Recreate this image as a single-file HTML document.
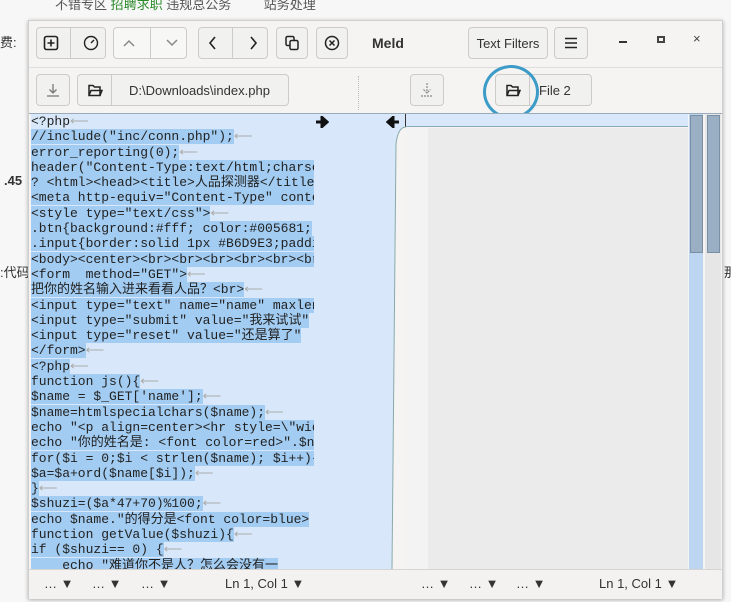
<!DOCTYPE html>
<html><head><meta charset="utf-8"><style>
*{margin:0;padding:0;box-sizing:border-box}
body{width:731px;height:602px;overflow:hidden;background:#f7f7f7;font-family:"Liberation Sans","Noto Sans CJK SC",sans-serif;position:relative}
.bgt{position:absolute;font-size:13px;color:#333}
.win{position:absolute;left:28px;top:20px;width:695px;height:579px;background:#f5f4f3;border:1px solid #cfcfcf;box-shadow:0 1px 4px rgba(0,0,0,.3)}
.btn{position:absolute;height:32px;background:#f1f1f0;border:1px solid #cdcbc8;border-radius:4px;display:flex;align-items:center;justify-content:center;color:#333;font-size:13px}
.sep{border-left:1px solid #cdcbc8}
svg{display:block}
.code{position:absolute;left:2px;top:93px;width:345px;height:455px;background:#d8e8fa;overflow:hidden;font-family:"Liberation Mono","Noto Sans CJK SC",monospace;font-size:13px;color:#222}
.code>div>div{height:15.3px;line-height:15.3px;white-space:pre;overflow:visible}
.code span{background:#a2ccf2}
.code i{font-style:normal;color:#aaa}
.status{position:absolute;left:0;top:548px;width:693px;height:30px;background:#f3f2f1;border-top:1px solid #d5d5d5;font-size:13px;color:#333}
.status div{position:absolute;top:6px}
</style></head><body>
<div class="bgt" style="left:55px;top:-6px;color:#555">不错专区 <span style="color:#2a8a2a">招聘求职</span> 违规总公务 &nbsp;&nbsp;&nbsp;&nbsp;&nbsp;&nbsp;&nbsp;&nbsp;站务处理</div>
<div class="bgt" style="left:0;top:32px">费:</div>
<div class="bgt" style="left:4px;top:173px;font-weight:bold">.45</div>
<div class="bgt" style="left:0;top:262px">:代码</div>
<div class="bgt" style="left:724px;top:262px">那</div>
<div class="win">
 <div class="btn" style="left:7px;top:6px;width:70px;justify-content:space-around"><svg width="16" height="16"><rect x="1.5" y="1.5" width="13" height="13" rx="2" fill="none" stroke="#222" stroke-width="1.6"/><path d="M8 4.5v7M4.5 8h7" stroke="#222" stroke-width="1.6"/></svg><span class="sep" style="height:30px"></span><svg width="16" height="16"><circle cx="8" cy="8" r="6.5" fill="none" stroke="#222" stroke-width="1.4"/><path d="M8 8l3-3" stroke="#222" stroke-width="1.4"/></svg></div>
 <div class="btn" style="left:84px;top:6px;width:74px;justify-content:space-around;background:#f7f7f6"><svg width="16" height="16"><path d="M3 11l5-5 5 5" fill="none" stroke="#888" stroke-width="1.5"/></svg><span class="sep" style="height:30px"></span><svg width="16" height="16"><path d="M3 5l5 5 5-5" fill="none" stroke="#888" stroke-width="1.5"/></svg></div>
 <div class="btn" style="left:169px;top:6px;width:70px;justify-content:space-around"><svg width="16" height="16"><path d="M10 2l-5 6 5 6" fill="none" stroke="#222" stroke-width="1.6"/></svg><span class="sep" style="height:30px"></span><svg width="16" height="16"><path d="M6 2l5 6-5 6" fill="none" stroke="#222" stroke-width="1.6"/></svg></div>
 <div class="btn" style="left:247px;top:6px;width:32px"><svg width="16" height="16"><rect x="2" y="1.5" width="8" height="9" rx="1.5" fill="none" stroke="#222" stroke-width="1.5"/><rect x="6" y="5.5" width="8" height="9" rx="1.5" fill="#f1f1f0" stroke="#222" stroke-width="1.5"/></svg></div>
 <div class="btn" style="left:287px;top:6px;width:32px"><svg width="16" height="16"><circle cx="8" cy="8" r="6.5" fill="none" stroke="#222" stroke-width="1.5"/><path d="M5.5 5.5l5 5M10.5 5.5l-5 5" stroke="#222" stroke-width="1.5"/></svg></div>
 <div style="position:absolute;left:343px;top:14px;font-weight:bold;font-size:14px;color:#333">Meld</div>
 <div class="btn" style="left:439px;top:6px;width:80px">Text Filters</div>
 <div class="btn" style="left:525px;top:6px;width:34px"><svg width="16" height="16"><path d="M2 3.5h12M2 8h12M2 12.5h12" stroke="#222" stroke-width="1.6"/></svg></div>
 <div style="position:absolute;left:590px;top:20px;width:8px;height:2px;background:#333"></div>
 <div style="position:absolute;left:628px;top:15px;width:8px;height:7px;border:2px solid #444"></div>
 <div style="position:absolute;left:664px;top:10px;font-size:13px;color:#444">×</div>
 <div style="position:absolute;left:0;top:46px;width:693px;height:1px;background:#ddd"></div>
 <div class="btn" style="left:7px;top:53px;width:34px"><svg width="16" height="16"><path d="M8 2v9M4.5 7.5L8 11l3.5-3.5M2 14h12" fill="none" stroke="#777" stroke-width="1.3"/></svg></div>
 <div class="btn" style="left:48px;top:53px;width:212px;justify-content:flex-start"><div style="width:34px;height:30px;display:flex;align-items:center;justify-content:center;border-right:1px solid #cdcbc8"><svg width="16" height="16"><path d="M2 3.5h4l1.5 1.5H13v8.5H2z" fill="none" stroke="#222" stroke-width="1.5"/><path d="M2 13.5l2-5h11l-2 5" fill="none" stroke="#222" stroke-width="1.5"/></svg></div><span style="margin-left:17px">D:\Downloads\index.php</span></div>
 <div style="position:absolute;left:329px;top:55px;height:34px;border-left:1px dotted #bbb"></div>
 <div class="btn" style="left:381px;top:53px;width:34px"><svg width="16" height="16"><path d="M8 1v10M4.5 7.5L8 11l3.5-3.5M2 14h12" fill="none" stroke="#888" stroke-width="1.2" stroke-dasharray="2 1"/></svg></div>
 <div class="btn" style="left:466px;top:53px;width:97px;justify-content:flex-start"><div style="width:34px;height:30px;display:flex;align-items:center;justify-content:center;border-right:1px solid #cdcbc8"><svg width="16" height="16"><path d="M2 3.5h4l1.5 1.5H13v8.5H2z" fill="none" stroke="#222" stroke-width="1.5"/><path d="M2 13.5l2-5h11l-2 5" fill="none" stroke="#222" stroke-width="1.5"/></svg></div><span style="margin-left:9px">File 2</span></div>
 <div style="position:absolute;left:454px;top:44px;width:56px;height:54px;border:3px solid #3d9bc8;border-radius:50%"></div>
 <div style="position:absolute;left:0;top:92px;width:693px;height:1px;background:#9ab"></div>
 <div class="code"><div style="width:283px;overflow:hidden"><div>&lt;?php<i>⟵</i></div><div><span>//include("inc/conn.php");</span><i>⟵</i></div><div><span>error_reporting(0);</span><i>⟵</i></div><div><span>header("Content-Type:text/html;charset=</span></div><div><span>? &lt;html&gt;&lt;head&gt;&lt;title&gt;人品探测器&lt;/title&gt;</span></div><div><span>&lt;meta http-equiv="Content-Type" content</span></div><div><span>&lt;style type="text/css"&gt;</span><i>⟵</i></div><div><span>.btn{background:#fff; color:#005681;</span></div><div><span>.input{border:solid 1px #B6D9E3;padding</span></div><div><span>&lt;body&gt;&lt;center&gt;&lt;br&gt;&lt;br&gt;&lt;br&gt;&lt;br&gt;&lt;br&gt;&lt;br&gt;</span></div><div><span>&lt;form  method="GET"&gt;</span><i>⟵</i></div><div><span>把你的姓名输入进来看看人品？&lt;br&gt;</span><i>⟵</i></div><div><span>&lt;input type="text" name="name" maxlength</span></div><div><span>&lt;input type="submit" value="我来试试"</span></div><div><span>&lt;input type="reset" value="还是算了"</span></div><div><span>&lt;/form&gt;</span><i>⟵</i></div><div><span>&lt;?php</span><i>⟵</i></div><div><span>function js(){</span><i>⟵</i></div><div><span>$name = $_GET['name'];</span><i>⟵</i></div><div><span>$name=htmlspecialchars($name);</span><i>⟵</i></div><div><span>echo "&lt;p align=center&gt;&lt;hr style=\"width</span></div><div><span>echo "你的姓名是: &lt;font color=red&gt;".$na</span></div><div><span>for($i = 0;$i &lt; strlen($name); $i++){</span></div><div><span>$a=$a+ord($name[$i]);</span><i>⟵</i></div><div><span>}</span><i>⟵</i></div><div><span>$shuzi=($a*47+70)%100;</span><i>⟵</i></div><div><span>echo $name."的得分是&lt;font color=blue&gt;</span></div><div><span>function getValue($shuzi){</span><i>⟵</i></div><div><span>if ($shuzi== 0) {</span><i>⟵</i></div><div><span>    echo "难道你不是人？怎么会没有一</span></div></div></div>
 <svg style="position:absolute;left:347px;top:93px" width="32" height="455"><path d="M0 0H32V13H30Q22 13 20 30L16 455H0Z" fill="#d8e8fa"/><path d="M30 13Q22 13 20 30L16 455" fill="none" stroke="#8aa" stroke-width="1"/></svg>
 <div style="position:absolute;left:376px;top:93px;width:283px;height:13px;background:#d8e8fa;border-bottom:1px solid #8ab;border-left:1px solid #333"></div>
 <div style="position:absolute;left:377px;top:107px;width:282px;height:441px;background:#ebebeb"></div>
 <div style="position:absolute;left:377px;top:107px;width:22px;height:441px;background:#f3f3f3"></div>
 <div style="position:absolute;left:660px;top:93px;width:14px;height:455px;background:#bcd6f2"></div>
 <div style="position:absolute;left:676px;top:93px;width:16px;height:455px;background:#e6e6e6"></div>
 <div style="position:absolute;left:661px;top:94px;width:13px;height:138px;background:#9aaec4;border:1px solid #7a8ea4"></div>
 <div style="position:absolute;left:678px;top:94px;width:13px;height:138px;background:#9aaec4;border:1px solid #7a8ea4"></div>
 <svg style="position:absolute;left:286px;top:95px" width="14" height="12"><path d="M1 6h7M7 1.5L12 6 7 10.5z" stroke="#111" stroke-width="3" fill="#111"/></svg>
 <svg style="position:absolute;left:357px;top:95px" width="14" height="12"><path d="M13 6H6M7 1.5L2 6 7 10.5z" stroke="#111" stroke-width="3" fill="#111"/></svg>
 <div class="status">
  <div style="left:15px">… ▼</div><div style="left:63px">… ▼</div><div style="left:112px">… ▼</div>
  <div style="left:196px">Ln 1, Col 1 ▼</div>
  <div style="left:392px">… ▼</div><div style="left:440px">… ▼</div><div style="left:487px">… ▼</div>
  <div style="left:570px">Ln 1, Col 1 ▼</div>
 </div>
</div>
</body></html>
